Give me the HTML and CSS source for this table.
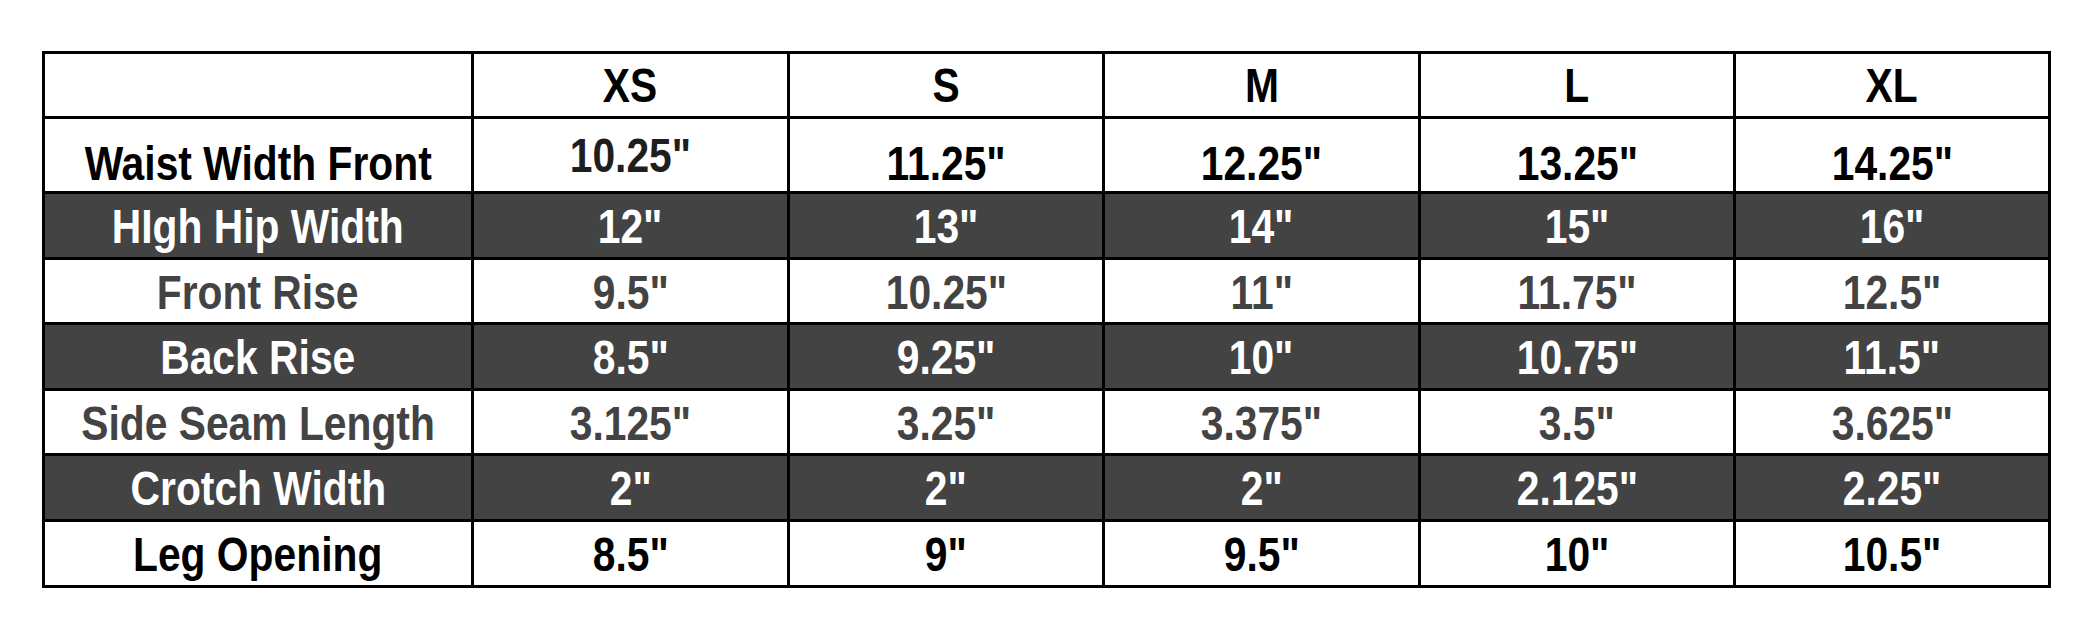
FILE: index.html
```html
<!DOCTYPE html>
<html lang="en">
<head>
<meta charset="utf-8">
<title>Size Chart</title>
<link rel="stylesheet" href="styles.css">
</head>
<body>
<div class="page">
  <table class="chart">
    <colgroup>
      <col class="c-label">
      <col class="c-s1">
      <col class="c-s2">
      <col class="c-s1">
      <col class="c-s2">
      <col class="c-s2">
    </colgroup>
    <tr class="row head">
      <td></td><td><span class="t">XS</span></td><td><span class="t">S</span></td><td><span class="t">M</span></td><td><span class="t">L</span></td><td><span class="t">XL</span></td>
    </tr>
    <tr class="row waist">
      <td><span class="t">Waist Width Front</span></td><td class="raised"><span class="t">10.25"</span></td><td><span class="t">11.25"</span></td><td><span class="t">12.25"</span></td><td><span class="t">13.25"</span></td><td><span class="t">14.25"</span></td>
    </tr>
    <tr class="row dark">
      <td><span class="t">HIgh Hip Width</span></td><td><span class="t">12"</span></td><td><span class="t">13"</span></td><td><span class="t">14"</span></td><td><span class="t">15"</span></td><td><span class="t">16"</span></td>
    </tr>
    <tr class="row grey">
      <td><span class="t">Front Rise</span></td><td><span class="t">9.5"</span></td><td><span class="t">10.25"</span></td><td><span class="t">11"</span></td><td><span class="t">11.75"</span></td><td><span class="t">12.5"</span></td>
    </tr>
    <tr class="row dark">
      <td><span class="t">Back Rise</span></td><td><span class="t">8.5"</span></td><td><span class="t">9.25"</span></td><td><span class="t">10"</span></td><td><span class="t">10.75"</span></td><td><span class="t">11.5"</span></td>
    </tr>
    <tr class="row grey">
      <td><span class="t">Side Seam Length</span></td><td><span class="t">3.125"</span></td><td><span class="t">3.25"</span></td><td><span class="t">3.375"</span></td><td><span class="t">3.5"</span></td><td><span class="t">3.625"</span></td>
    </tr>
    <tr class="row dark">
      <td><span class="t">Crotch Width</span></td><td><span class="t">2"</span></td><td><span class="t">2"</span></td><td><span class="t">2"</span></td><td><span class="t">2.125"</span></td><td><span class="t">2.25"</span></td>
    </tr>
    <tr class="row plain">
      <td><span class="t">Leg Opening</span></td><td><span class="t">8.5"</span></td><td><span class="t">9"</span></td><td><span class="t">9.5"</span></td><td><span class="t">10"</span></td><td><span class="t">10.5"</span></td>
    </tr>
  </table>
</div>
</body>
</html>
```
FILE: styles.css
```css
html, body {
  margin: 0;
  padding: 0;
  background: #ffffff;
}

.page {
  padding: 51px 0 0 42px;
}

.chart {
  border-collapse: collapse;
  table-layout: fixed;
  width: 2006px;
  font-family: "Liberation Sans", Arial, sans-serif;
  font-weight: bold;
  font-size: 48px;
  color: #000;
}

.c-label { width: 429px; }
.c-s1 { width: 316px; }
.c-s2 { width: 315px; }

.chart td {
  border: 3px solid #000;
  text-align: center;
  vertical-align: middle;
  padding: 0;
  line-height: 1;
  white-space: nowrap;
}

.t {
  display: inline-block;
  transform: scaleX(0.85);
}

.head td { height: 61px; padding-top: 1px; }
.waist td { height: 54px; padding-top: 18px; }
.waist td.raised { height: 71px; padding-top: 1px; color: #1e1e1e; }
.dark td { height: 60px; padding-top: 3px; background: #434343; color: #ffffff; }
.grey td { height: 59px; padding-top: 3px; color: #434343; }
.plain td { height: 60px; padding-top: 3px; }
```
